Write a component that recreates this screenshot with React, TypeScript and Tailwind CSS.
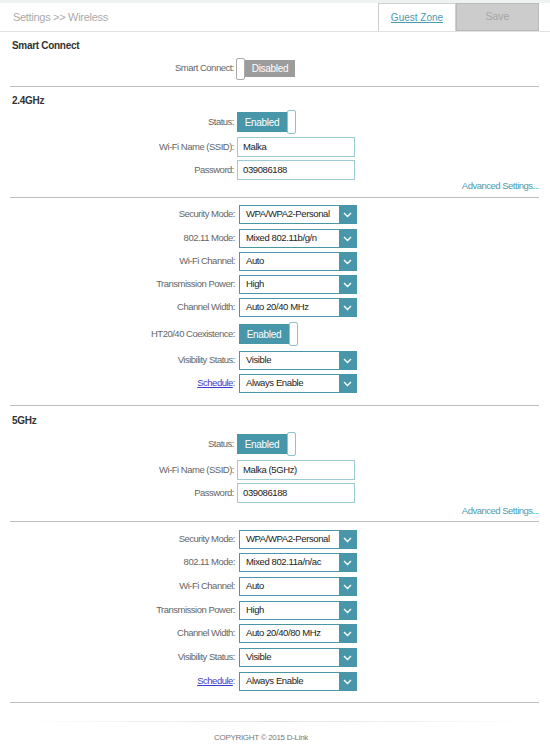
import React from "react";

const Chevron = () => (
  <svg width="9" height="6" viewBox="0 0 9 6" fill="none">
    <path d="M1 1 L4.5 4.5 L8 1" stroke="white" strokeWidth="1.4" />
  </svg>
);

const Label = ({ children, w = "w-[224px]" }: { children: React.ReactNode; w?: string }) => (
  <div className={`${w} shrink-0 text-right text-[9.5px] tracking-[-0.5px] text-[#666]`}>{children}</div>
);

const Select = ({ label, value, mt, schedule }: { label: string; value: string; mt: string; schedule?: boolean }) => (
  <div className={`flex items-center h-[19px] ${mt}`}>
    <Label w="w-[225px]">
      {schedule ? (
        <>
          <span className="text-[#3b3bd0] underline">Schedule</span>:
        </>
      ) : (
        label
      )}
    </Label>
    <div className="ml-[4px] w-[118px] h-[19px] flex border border-[#4796a9]">
      <div className="flex-1 flex items-center pl-[6px] text-[9.5px] tracking-[-0.4px] text-[#222] bg-white">{value}</div>
      <div className="w-[17px] bg-[#4796a9] flex items-center justify-center">
        <Chevron />
      </div>
    </div>
  </div>
);

const Input = ({ label, value, mt }: { label: string; value: string; mt: string }) => (
  <div className={`flex items-center h-[20px] ${mt}`}>
    <Label>{label}</Label>
    <div className="ml-[3px] w-[118px] h-[20px] border border-[#9ccbd6] flex items-center pl-[5px] text-[9.5px] tracking-[-0.4px] text-[#222]">
      {value}
    </div>
  </div>
);

const Enabled = () => (
  <div className="flex items-center">
    <div className="w-[50px] h-[20px] bg-[#4796a9] text-white text-[10px] tracking-[-0.3px] flex items-center justify-center">
      Enabled
    </div>
    <div className="w-[9px] h-[24px] bg-white border border-[#8fc2cf] rounded-[2px]" />
  </div>
);

const ToggleRow = ({ label, mt }: { label: string; mt: string }) => (
  <div className={`flex items-center h-[24px] ${mt}`}>
    <Label>{label}</Label>
    <div className="ml-[3px]">
      <Enabled />
    </div>
  </div>
);

const Heading = ({ children, mt }: { children: React.ReactNode; mt: string }) => (
  <div className={`h-[12px] leading-[12px] ${mt} pl-[2px] text-[10px] font-bold tracking-[-0.3px] text-[#333]`}>{children}</div>
);

const Line = ({ mt }: { mt: string }) => <div className={`h-px bg-[#bdbdbd] ${mt}`} />;

const Adv = ({ mt }: { mt: string }) => (
  <div className={`h-[12px] leading-[12px] ${mt} text-right text-[9.5px] tracking-[-0.5px] text-[#4a9bb0]`}>Advanced Settings...</div>
);

export default function App() {
  return (
    <div className="w-[550px] h-[750px] bg-white overflow-hidden" style={{ fontFamily: '"Liberation Sans", Arial, sans-serif' }}>
      <div className="h-[3px] bg-[#eef2f2]" />
      <div className="h-[29px] flex border-b border-[#e2e2e2]">
        <div className="flex-1 flex items-center pl-[13px] text-[11px] tracking-[-0.3px] text-[#aaa]">Settings &gt;&gt; Wireless</div>
        <div className="w-[78px] border border-[#cfcfcf] border-b-0 flex items-center justify-center text-[10px] text-[#4a9bb0] underline">
          Guest Zone
        </div>
        <div className="w-[83px] bg-[#cccccc] border border-[#b9b9b9] flex items-center justify-center text-[10.5px] text-[#a5a5a5]">
          Save
        </div>
        <div className="w-[11px]" />
      </div>

      <div className="pl-[10px] pr-[11px]">
        <Heading mt="mt-[8px]">Smart Connect</Heading>
        <div className="flex items-center h-[23px] mt-[5px]">
          <Label>Smart Connect:</Label>
          <div className="ml-[2px] flex items-center">
            <div className="w-[9px] h-[22px] bg-white border border-[#aaa] rounded-[2px]" />
            <div className="w-[50px] h-[17px] bg-[#9c9c9c] text-white text-[10px] tracking-[-0.3px] flex items-center justify-center">
              Disabled
            </div>
          </div>
        </div>
        <Line mt="mt-[6px]" />

        <Heading mt="mt-[8px]">2.4GHz</Heading>
        <ToggleRow label="Status:" mt="mt-[3px]" />
        <Input label="Wi-Fi Name (SSID):" value="Malka" mt="mt-[3px]" />
        <Input label="Password:" value="039086188" mt="mt-[3px]" />
        <Adv mt="mt-0" />
        <Line mt="mt-[5px]" />

        <Select label="Security Mode:" value="WPA/WPA2-Personal" mt="mt-[7px]" />
        <Select label="802.11 Mode:" value="Mixed 802.11b/g/n" mt="mt-[5px]" />
        <Select label="Wi-Fi Channel:" value="Auto" mt="mt-[4px]" />
        <Select label="Transmission Power:" value="High" mt="mt-[4px]" />
        <Select label="Channel Width:" value="Auto 20/40 MHz" mt="mt-[4px]" />
        <div className="flex items-center h-[24px] mt-[5px]">
          <Label w="w-[225px]">HT20/40 Coexistence:</Label>
          <div className="ml-[4px]">
            <Enabled />
          </div>
        </div>
        <Select label="Visibility Status:" value="Visible" mt="mt-[5px]" />
        <Select label="Schedule:" value="Always Enable" mt="mt-[4px]" schedule />
        <Line mt="mt-[12px]" />

        <Heading mt="mt-[9px]">5GHz</Heading>
        <ToggleRow label="Status:" mt="mt-[5px]" />
        <Input label="Wi-Fi Name (SSID):" value="Malka (5GHz)" mt="mt-[4px]" />
        <Input label="Password:" value="039086188" mt="mt-[3px]" />
        <Adv mt="mt-[2px]" />
        <Line mt="mt-[4px]" />

        <Select label="Security Mode:" value="WPA/WPA2-Personal" mt="mt-[8px]" />
        <Select label="802.11 Mode:" value="Mixed 802.11a/n/ac" mt="mt-[4px]" />
        <Select label="Wi-Fi Channel:" value="Auto" mt="mt-[5px]" />
        <Select label="Transmission Power:" value="High" mt="mt-[5px]" />
        <Select label="Channel Width:" value="Auto 20/40/80 MHz" mt="mt-[4px]" />
        <Select label="Visibility Status:" value="Visible" mt="mt-[5px]" />
        <Select label="Schedule:" value="Always Enable" mt="mt-[5px]" schedule />
        <Line mt="mt-[11px]" />
      </div>

      <div className="mt-[18px] mx-[20px] h-px bg-gradient-to-r from-transparent via-[#e2e2e2] to-transparent" />
      <div className="mt-[10px] pr-[28px] text-center text-[8px] tracking-[-0.3px] text-[#777]">COPYRIGHT © 2015 D-Link</div>
    </div>
  );
}
